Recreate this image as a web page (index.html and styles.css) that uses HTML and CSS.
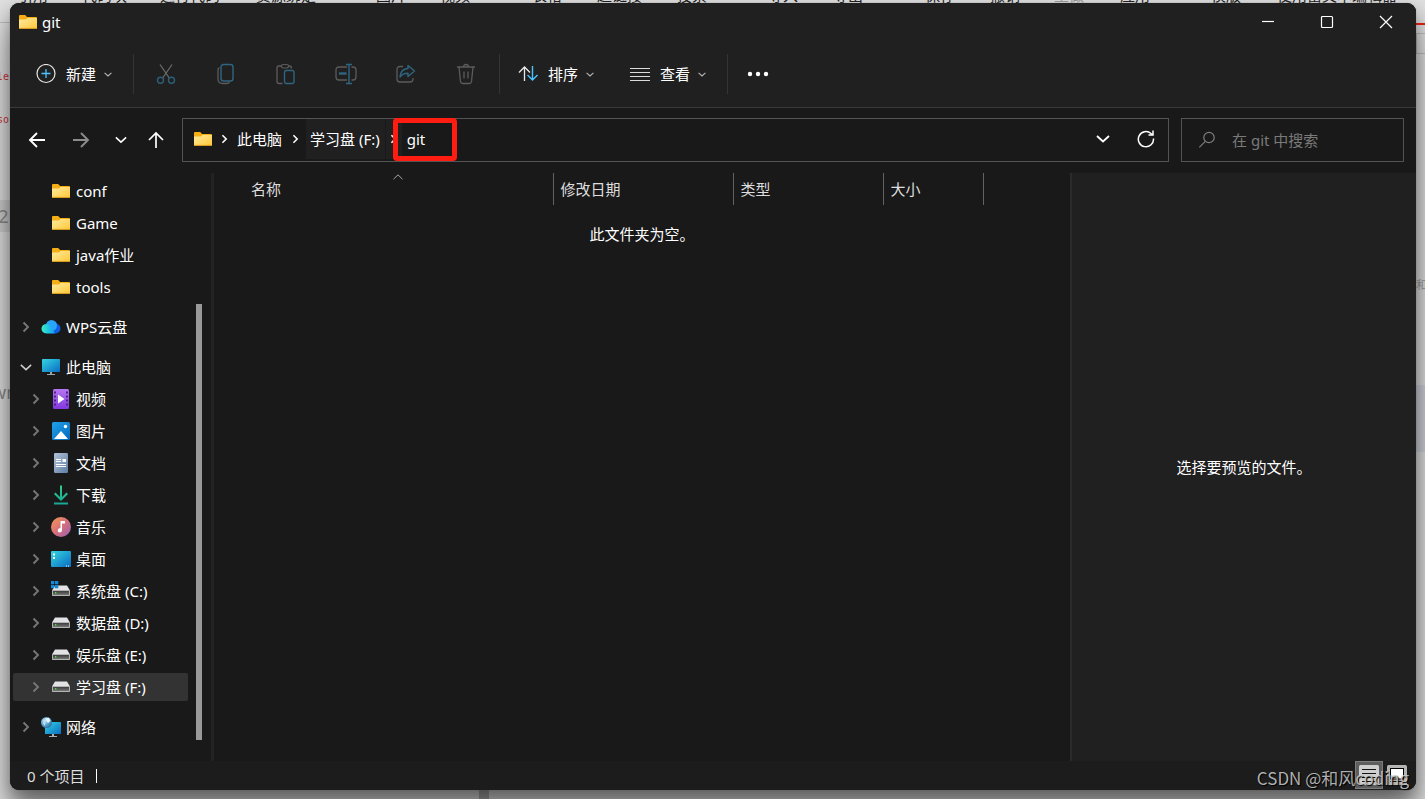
FILE: index.html
```html
<!DOCTYPE html>
<html lang="zh-CN">
<head>
<meta charset="utf-8">
<title>git</title>
<link rel="stylesheet" href="styles.css">
</head>
<body>
<svg class="defs" width="0" height="0" aria-hidden="true">
  <defs>
    <linearGradient id="gFolder" x1="0" y1="0" x2="1" y2="1"><stop offset="0" stop-color="#ffe9a2"/><stop offset="1" stop-color="#ffc937"/></linearGradient>
    <linearGradient id="gScreen" x1="0" y1="0" x2="1" y2="1"><stop offset="0" stop-color="#34d5e0"/><stop offset="1" stop-color="#0a6cc4"/></linearGradient>
    <linearGradient id="gVideo" x1="0" y1="0" x2="0" y2="1"><stop offset="0" stop-color="#b676f2"/><stop offset="1" stop-color="#8338dd"/></linearGradient>
    <linearGradient id="gPic" x1="0" y1="0" x2="1" y2="1"><stop offset="0" stop-color="#1fa3ea"/><stop offset="1" stop-color="#0767bd"/></linearGradient>
    <linearGradient id="gDoc" x1="0" y1="0" x2="1" y2="1"><stop offset="0" stop-color="#b3c3d8"/><stop offset="1" stop-color="#5d7da3"/></linearGradient>
    <linearGradient id="gDown" x1="0" y1="0" x2="0" y2="1"><stop offset="0" stop-color="#2fd08a"/><stop offset="1" stop-color="#16a597"/></linearGradient>
    <linearGradient id="gMusic" x1="0" y1="0" x2="1" y2="1"><stop offset="0" stop-color="#f49a52"/><stop offset=".5" stop-color="#d7707a"/><stop offset="1" stop-color="#9560b8"/></linearGradient>
    <linearGradient id="gCloud" x1="0" y1="0" x2="1" y2="0"><stop offset="0" stop-color="#36f0c0"/><stop offset="1" stop-color="#0f9bff"/></linearGradient>
    <linearGradient id="gDrive" x1="0" y1="0" x2="0" y2="1"><stop offset="0" stop-color="#3c3c3c"/><stop offset="1" stop-color="#777"/></linearGradient>
    <radialGradient id="gGlobe" cx=".35" cy=".35" r=".7"><stop offset="0" stop-color="#d4eefa"/><stop offset=".5" stop-color="#5fa9d2"/><stop offset="1" stop-color="#2c6f9f"/></radialGradient>
    <symbol id="folder" viewBox="0 0 20 20"><path d="M1 4q0-1 1-1h5.200l1.800 2h9q1 0 1 1v10.500H1z" fill="#f7ae12"/><path d="M1 7.500h7l1.700-1.500H19v10q0 .6-.6.6H1.600q-.6 0-.6-.6z" fill="url(#gFolder)"/><path d="M1 16.400h18" stroke="#dd9a1c" stroke-width=".8"/></symbol>
    <symbol id="drive" viewBox="0 0 20 20"><path d="M4 4.500h12l3 5H1z" fill="#e2e2e4"/><rect x="1" y="9" width="18" height="6" rx=".8" fill="#b4b4b4"/><rect x="2" y="10" width="16" height="4" fill="url(#gDrive)"/><rect x="4" y="11" width="1.300" height="1.500" fill="#3dea35"/></symbol>
    <symbol id="right" viewBox="0 0 8 12"><path d="M1.500 1.500 6 6l-4.500 4.500" fill="none" stroke="currentColor" stroke-width="1.900"/></symbol>
    <symbol id="down" viewBox="0 0 14 8"><path d="m1 1 6 5.500L13 1" fill="none" stroke="currentColor" stroke-width="1.800"/></symbol>
  </defs>
</svg>

<div class="backdrop" aria-hidden="true">
  <span class="bt" style="left:18px">引用</span><span class="bt" style="left:82px">代码块</span><span class="bt" style="left:160px">运行代码</span><span class="bt" style="left:256px">资源绑定</span><span class="bt" style="left:376px">图片</span><span class="bt" style="left:440px">视频</span><span class="bt" style="left:532px">表格</span><span class="bt" style="left:597px">超链接</span><span class="bt" style="left:677px">投票</span><span class="bt" style="left:768px">导入</span><span class="bt" style="left:833px">导出</span><span class="bt" style="left:925px">保存</span><span class="bt" style="left:990px">撤销</span><span class="bt faint" style="left:1054px">重做</span><span class="bt" style="left:1120px">应用</span><span class="bt" style="left:1211px">模版</span><span class="bt" style="left:1277px">使用富文本编辑器</span>
  <i class="lline"></i><span class="code c1">ale</span><span class="code c2">eso</span>
  <span class="gutter g1">62</span><span class="gutter g2">wn</span>
  <i class="redline"></i><i class="rbox"></i><i class="rblock"></i><span class="rtext">学和</span><i class="tick"></i>
</div>

<main class="window">
  <header class="chrome">
    <div class="titlebar">
      <svg class="i20"><use href="#folder"/></svg>
      <h1 class="title">git</h1>
      <div class="caption">
        <button class="cap" aria-label="最小化"><svg width="14" height="14" viewBox="0 0 14 14"><path d="M1 6.500h12" stroke="#fff" stroke-width="1.200"/></svg></button>
        <button class="cap" aria-label="最大化"><svg width="14" height="14" viewBox="0 0 14 14"><rect x="1.500" y="1.500" width="11" height="11" rx="1" fill="none" stroke="#fff" stroke-width="1.200"/></svg></button>
        <button class="cap" aria-label="关闭"><svg width="14" height="14" viewBox="0 0 14 14"><path d="m1 1 12 12M13 1 1 13" stroke="#fff" stroke-width="1.200"/></svg></button>
      </div>
    </div>
    <div class="toolbar">
      <button class="cmd">
        <svg class="i20" viewBox="0 0 20 20" fill="none"><circle cx="10" cy="9.500" r="9" stroke="#e8e8e8" stroke-width="1.200"/><path d="M10 5v9M5.500 9.500h9" stroke="#4cc2ff" stroke-width="1.300"/></svg>
        新建<svg class="caret"><use href="#down"/></svg>
      </button>
      <span class="sep"></span>
      <div class="tools">
        <button class="tool" aria-label="剪切"><svg width="22" height="22" viewBox="0 0 22 22" fill="none"><path d="M5 1.500 14.300 15M17 1.500 7.700 15" stroke="#6b6b6b" stroke-width="1.300"/><circle cx="5.500" cy="17.300" r="3" stroke="#2c5f79" stroke-width="1.400"/><circle cx="16.500" cy="17.300" r="3" stroke="#2c5f79" stroke-width="1.400"/></svg></button>
        <button class="tool" aria-label="复制"><svg width="22" height="22" viewBox="0 0 22 22" fill="none"><path d="M4.500 4.500Q3 5 3 7v9q0 4.500 4.500 4.500h4Q14 20.500 14.500 19" stroke="#5b5b5b" stroke-width="1.300"/><rect x="6" y="1.500" width="12" height="16.500" rx="2.500" stroke="#2f6580" stroke-width="1.400"/></svg></button>
        <button class="tool" aria-label="粘贴"><svg width="22" height="22" viewBox="0 0 22 22" fill="none"><path d="M7 3H3.800Q2 3 2 5v13.500q0 2 2 2h3.500M13 3h1.500Q16.500 3 16.500 5.500" stroke="#5b5b5b" stroke-width="1.300"/><rect x="6.500" y="1.500" width="7" height="3.500" rx="1.700" stroke="#5b5b5b" stroke-width="1.200"/><rect x="9.500" y="7.500" width="9.500" height="13" rx="1.700" stroke="#2f6580" stroke-width="1.400"/></svg></button>
        <button class="tool" aria-label="重命名"><svg width="22" height="22" viewBox="0 0 22 22" fill="none"><path d="M12 4H4Q1 4 1 7v7q0 3 3 3h8M16.500 4h1.500q3 0 3 3v7q0 3-3 3h-1.500" stroke="#5b5b5b" stroke-width="1.300"/><path d="M14 1.500v19M11 1.500h6M11 20.500h6" stroke="#2f6580" stroke-width="1.400"/><path d="M4 10.500h7.500" stroke="#2f6580" stroke-width="2.400"/></svg></button>
        <button class="tool" aria-label="共享"><svg width="22" height="22" viewBox="0 0 22 22" fill="none"><path d="M8 3.500H5q-3 0-3 3V16q0 3 3 3h10q3 0 3-3v-1" stroke="#5b5b5b" stroke-width="1.300"/><path d="M13 2.500 19.500 8 13 13.500v-3.200q-5-.3-8 3.700.5-8 8-8.500z" stroke="#2f6580" stroke-width="1.400" stroke-linejoin="round"/></svg></button>
        <button class="tool" aria-label="删除"><svg width="22" height="22" viewBox="0 0 22 22" fill="none" stroke="#5b5b5b" stroke-width="1.300"><path d="M2 4h18M8.500 4q0-2.500 2.500-2.500T13.500 4M4 4l1.500 14.500q.3 2 2.200 2h6.600q1.900 0 2.200-2L18 4M9 8.500v7M13 8.500v7"/></svg></button>
      </div>
      <span class="sep"></span>
      <button class="cmd sort">
        <svg class="i20" viewBox="0 0 20 20" fill="none"><path d="M6.500 17V3M1 8.500 6.500 3 12 8.500" stroke="#e8e8e8" stroke-width="1.300"/><path d="M14.500 2v14M9.500 11l5 5 5-5" stroke="#4cc2ff" stroke-width="1.400"/></svg>
        排序<svg class="caret"><use href="#down"/></svg>
      </button>
      <button class="cmd view">
        <svg class="i20" viewBox="0 0 20 20"><path d="M0 4.500h20M0 8.500h20M0 12.500h20M0 16.500h20" stroke="#dcdcdc" stroke-width="1.200"/></svg>
        查看<svg class="caret"><use href="#down"/></svg>
      </button>
      <span class="sep"></span>
      <button class="tool" aria-label="查看更多"><svg width="22" height="22" viewBox="0 0 22 22" fill="#fff"><circle cx="3" cy="11" r="2.200"/><circle cx="11" cy="11" r="2.200"/><circle cx="19" cy="11" r="2.200"/></svg></button>
    </div>
  </header>

  <nav class="navrow" aria-label="导航">
    <div class="arrows">
      <button class="nav" aria-label="后退"><svg width="18" height="18" viewBox="0 0 18 18" fill="none"><path d="M17 9H2M9 2 2 9l7 7" stroke="#fff" stroke-width="1.900"/></svg></button>
      <button class="nav" aria-label="前进"><svg width="18" height="18" viewBox="0 0 18 18" fill="none"><path d="M1 9h15M9 2l7 7-7 7" stroke="#8c8c8c" stroke-width="1.900"/></svg></button>
      <button class="nav slim" aria-label="最近浏览的位置"><svg width="12" height="8"><use href="#down"/></svg></button>
      <button class="nav slim" aria-label="向上"><svg width="18" height="18" viewBox="0 0 18 18" fill="none"><path d="M9 17V2M2 9l7-7 7 7" stroke="#fff" stroke-width="1.700"/></svg></button>
    </div>
    <div class="address">
      <svg class="i20"><use href="#folder"/></svg>
      <svg class="crumbsep"><use href="#right"/></svg>
      <a class="crumb" href="#">此电脑</a>
      <svg class="crumbsep"><use href="#right"/></svg>
      <a class="crumb hot" href="#">学习盘 (F:)</a>
      <span class="hotsep"><svg class="crumbsep"><use href="#right"/></svg></span>
      <a class="crumb current" href="#">git<i class="mark"></i></a>
      <div class="addrbtns">
        <button class="plain" aria-label="上一个位置"><svg width="14" height="8"><use href="#down"/></svg></button>
        <button class="plain" aria-label="刷新"><svg width="18" height="18" viewBox="0 0 18 18" fill="none" stroke="#fff" stroke-width="1.500"><path d="M16.500 8.500A7.600 7.600 0 1 1 14 3.500l2 1.500M16 .5V5h-4.500"/></svg></button>
      </div>
    </div>
    <label class="search">
      <svg width="18" height="18" viewBox="0 0 18 18" fill="none" stroke="#7d7d7d" stroke-width="1.200"><circle cx="11" cy="6.500" r="5.200"/><path d="m7.300 10.300-6 6"/></svg>
      <input class="searchbox" type="search" placeholder="在 git 中搜索" aria-label="在 git 中搜索">
    </label>
  </nav>

  <div class="body">
    <aside class="sidebar">
      <div class="tree">
        <div class="group">
          <a class="item leaf" href="#"><svg class="i20"><use href="#folder"/></svg>conf</a>
          <a class="item leaf" href="#"><svg class="i20"><use href="#folder"/></svg>Game</a>
          <a class="item leaf" href="#"><svg class="i20"><use href="#folder"/></svg>java作业</a>
          <a class="item leaf" href="#"><svg class="i20"><use href="#folder"/></svg>tools</a>
        </div>
        <div class="group">
          <a class="item" href="#"><svg class="exp"><use href="#right"/></svg><svg class="i20" viewBox="0 0 20 20"><circle cx="14.500" cy="11.500" r="5" fill="#0b5fe0"/><circle cx="10.500" cy="8.500" r="5.500" fill="#2aa4f8"/><path d="M5 7q4 0 5.500 3.500L14 16.500H5.500Q.5 16 .5 11.800T5 7z" fill="url(#gCloud)"/></svg>WPS云盘</a>
        </div>
        <div class="group">
          <a class="item open" href="#"><svg class="expdown"><use href="#down"/></svg><svg class="i20" viewBox="0 0 20 20"><rect x="1" y="2" width="18" height="13" rx=".7" fill="url(#gScreen)"/><path d="M9 15h2v2h3v1H6v-1h3z" fill="#9aa5ad"/></svg>此电脑</a>
          <a class="item sub" href="#"><svg class="exp"><use href="#right"/></svg><svg class="i20" viewBox="0 0 20 20"><rect x="2" y="0" width="16" height="20" rx="1.500" fill="url(#gVideo)"/><path d="M4 2.500v16M16 2.500v16" stroke="#4d2190" stroke-width="2" stroke-dasharray="2 2"/><path d="m7 5.500 6.500 4.500L7 14.500z" fill="#fff"/></svg>视频</a>
          <a class="item sub" href="#"><svg class="exp"><use href="#right"/></svg><svg class="i20" viewBox="0 0 20 20"><rect x="1" y="1" width="18" height="18" rx="1.500" fill="url(#gPic)"/><path d="m3 18 7-8 7 8z" fill="#fff"/><circle cx="14.500" cy="5.500" r="1.700" fill="#fff"/></svg>图片</a>
          <a class="item sub" href="#"><svg class="exp"><use href="#right"/></svg><svg class="i20" viewBox="0 0 20 20"><rect x="3" y="0" width="14" height="20" rx="1.300" fill="url(#gDoc)"/><path d="M5 6.500h5M5 8.500h5M5 11.500h10M5 13.500h10" stroke="#fff"/><rect x="11.500" y="6" width="3.500" height="3" fill="#fff"/></svg>文档</a>
          <a class="item sub" href="#"><svg class="exp"><use href="#right"/></svg><svg class="i20" viewBox="0 0 20 20"><path d="M9 .5h2V12l4.500-4.500L17 9l-7 7-7-7 1.500-1.500L9 12zM3 17.500h14v2H3z" fill="url(#gDown)"/></svg>下载</a>
          <a class="item sub" href="#"><svg class="exp"><use href="#right"/></svg><svg class="i20" viewBox="0 0 20 20"><circle cx="10" cy="10" r="10" fill="url(#gMusic)"/><path d="M9.500 4H14v2.500h-3v6.800a2.100 2.100 0 1 1-1.500-2z" fill="#fff"/></svg>音乐</a>
          <a class="item sub" href="#"><svg class="exp"><use href="#right"/></svg><svg class="i20" viewBox="0 0 20 20"><rect x="0" y="2" width="20" height="16" rx="1" fill="url(#gScreen)"/><path d="M2 4.500h2v2H2zM2 8h2v2H2z" fill="#fff"/><path d="M15 17h1M17 17h1" stroke="#fff"/></svg>桌面</a>
          <a class="item sub" href="#"><svg class="exp"><use href="#right"/></svg><svg class="i20" viewBox="0 0 20 20"><use href="#drive"/><path d="M0 0h3.300v3.300H0zM4 0h3.300v3.300H4zM0 4h3.300v3.300H0zM4 4h3.300v3.300H4z" fill="#1389d8"/></svg>系统盘 (C:)</a>
          <a class="item sub" href="#"><svg class="exp"><use href="#right"/></svg><svg class="i20"><use href="#drive"/></svg>数据盘 (D:)</a>
          <a class="item sub" href="#"><svg class="exp"><use href="#right"/></svg><svg class="i20"><use href="#drive"/></svg>娱乐盘 (E:)</a>
          <a class="item sub selected" href="#"><svg class="exp"><use href="#right"/></svg><svg class="i20"><use href="#drive"/></svg>学习盘 (F:)</a>
        </div>
        <div class="group">
          <a class="item" href="#"><svg class="exp"><use href="#right"/></svg><svg class="i20" viewBox="0 0 20 20"><rect x="4" y="5" width="16" height="12" rx=".6" fill="url(#gScreen)"/><path d="M11 17h2v2h3v1H8v-1h3z" fill="#a6b0b6"/><circle cx="5.500" cy="5.500" r="5.500" fill="url(#gGlobe)"/><path d="M4 1.500 8 .8 9.500 4 7 6zM2 5l2 1.500L3.500 9z" fill="#e6f6ff"/></svg>网络</a>
        </div>
      </div>
      <div class="scroll"><span class="thumb"></span></div>
    </aside>

    <section class="files">
      <table class="columns">
        <thead><tr>
          <th class="name">名称<svg class="asc" viewBox="0 0 10 6"><path d="M.5 5.200 5 .8l4.500 4.400" fill="none" stroke="#aaa"/></svg></th>
          <th class="date">修改日期</th><th class="type">类型</th><th class="size">大小</th>
        </tr></thead>
      </table>
      <p class="empty">此文件夹为空。</p>
    </section>

    <section class="preview"><p>选择要预览的文件。</p></section>
  </div>

  <footer class="status">
    <span class="count">0 个项目</span>
    <div class="modes">
      <button class="mode on" aria-label="详细信息"><svg width="20" height="20" viewBox="0 0 20 20"><rect width="20" height="20" rx="1.500" fill="#cfcfcf"/><path d="M3 4.500h14M3 8.500h14M3 12.500h14M3 16.500h14" stroke="#111" stroke-width="1.100"/></svg></button>
      <button class="mode" aria-label="大缩略图"><svg width="20" height="20" viewBox="0 0 20 20"><rect width="20" height="20" rx="1.500" fill="#b4b4b4"/><rect x="3.500" y="3.500" width="13" height="10.500" fill="#fff" stroke="#000"/><path d="M3 16.500h14" stroke="#111"/></svg></button>
    </div>
    <span class="watermark">CSDN @和风coding</span>
  </footer>
</main>
</body>
</html>
```

FILE: styles.css
```css
* { box-sizing: border-box; }

body {
  margin: 0;
  height: 100vh;
  padding: 3px 9px 9px 10px;
  overflow: hidden;
  position: relative;
  background: #dedede;
  color: #fff;
  font: 15px/20px "Noto Sans", "Noto Sans CJK SC", sans-serif;
}

button {
  padding: 0;
  border: 0;
  background: none;
  color: inherit;
  font: inherit;
}

a { color: inherit; text-decoration: none; }
p { margin: 0; }
svg { flex: none; display: block; }
.defs { position: absolute; }
.i20 { width: 20px; height: 20px; }

/* page behind the window */
.backdrop { position: absolute; inset: 0; overflow: hidden; color: #222; }
.backdrop > * { position: absolute; white-space: nowrap; }
.bt { top: -14px; font-size: 15px; line-height: 18px; }
.faint { color: #999; }
.code { left: -9px; color: #c33; font: 10px/12px "DejaVu Sans Mono", monospace; }
.c1 { top: 71px; }
.c2 { top: 114px; }
.lline { left: 0; top: 22px; width: 10px; height: 1px; background: #bbb; }
.gutter { color: #888; font-size: 18px; line-height: 32px; }
.g1 { left: -12px; top: 200px; width: 22px; background: #ccc; }
.g2 { left: -8px; top: 376px; }
.redline { right: 0; top: 23px; width: 9px; height: 2px; background: #f02010; }
.rbox { right: 0; top: 33px; width: 9px; height: 21px; border: 1px solid #bbb; border-right: 0; }
.rblock { right: 0; top: 385px; width: 9px; height: 67px; background: #ced0da; }
.rtext { right: -2px; top: 278px; color: #999; font-size: 11px; line-height: 14px; }
.tick { left: 479px; bottom: 0; width: 10px; height: 9px; background: #aaa; }

.window {
  position: relative;
  height: 100%;
  display: flex;
  flex-direction: column;
  border-radius: 9px;
  background: #191919;
  box-shadow: 0 0 1px #555, 0 8px 16px rgba(0, 0, 0, .3), 0 24px 32px rgba(0, 0, 0, .4);
}

.chrome { background: #202020; border-bottom: 1px solid #3a3a3a; border-radius: 9px 9px 0 0; }
.titlebar { display: flex; align-items: center; height: 37px; padding-left: 8px; }
.title { margin: 0 0 0 4px; font-size: 15px; font-weight: 400; }
.caption { display: flex; margin-left: auto; padding-right: 1px; align-self: stretch; }
.cap { width: 59px; display: grid; place-items: center; }

.toolbar { display: flex; align-items: center; height: 67px; padding: 1px 0 0 26px; }
.cmd { display: flex; align-items: center; gap: 10px; margin-right: 21px; white-space: nowrap; }
.caret { width: 8px; height: 5px; margin-left: -2px; color: #bbb; }
.sep { width: 1px; height: 40px; background: #343434; }
.tools { display: flex; padding: 0 3px 0 2px; }
.tool { width: 60px; height: 40px; display: grid; place-items: center; }
.sort { margin-left: 18px; margin-right: 36px; }

.navrow { display: flex; padding: 10px 12px 11px 5px; }
.arrows { display: flex; width: 167px; }
.nav { width: 44px; display: grid; place-items: center; }
.slim { width: 35px; }
.address {
  flex: 1;
  height: 44px;
  display: flex;
  align-items: center;
  padding: 0 10px 2px;
  border: 1px solid #535353;
}
.crumbsep { width: 7px; height: 10px; margin: 0 9px 0 8px; }
.crumb { white-space: nowrap; }
.crumb + .crumbsep { margin-left: 10px; }
.hot { align-self: stretch; display: flex; align-items: center; margin-left: -2px; padding: 0 5px 0 4px; background: #202020; }
.hotsep { align-self: stretch; display: flex; align-items: center; width: 16px; margin-left: 1px; background: #202020; }
.hotsep .crumbsep { margin: 0 4px; }
.current { position: relative; padding-left: 5px; }
.mark { position: absolute; left: -9px; top: -11px; width: 64px; height: 43px; border: 5px solid #ff1c10; border-radius: 4px; }
.addrbtns { display: flex; margin-left: auto; gap: 27px; padding: 0 3px; }
.plain { display: grid; place-items: center; }
.search {
  width: 223px;
  height: 44px;
  margin-left: 12px;
  display: flex;
  align-items: center;
  gap: 16px;
  padding: 0 0 1px 16px;
  border: 1px solid #535353;
}
.searchbox { flex: 1; min-width: 0; padding: 0; border: 0; outline: 0; background: none; color: #fff; font: inherit; }
.searchbox::placeholder { color: #7a7a7a; opacity: 1; }

.body { flex: 1; min-height: 0; display: flex; }
.sidebar { width: 204px; display: flex; border-right: 3px solid #222; }
.tree { width: 178px; padding: 4px 0 0 3px; display: flex; flex-direction: column; gap: 12px; }
.group { display: flex; flex-direction: column; gap: 4px; }
.item { height: 28px; display: flex; align-items: center; gap: 5px; padding-left: 9px; border-radius: 2px; white-space: nowrap; }
.sub { padding-left: 19px; }
.leaf { padding-left: 38px; }
.open { padding-left: 7px; }
.exp { width: 8px; height: 12px; margin-right: 6px; color: #777; }
.expdown { width: 12px; height: 7px; margin-right: 4px; color: #ccc; }
.selected { background: #333; }
.scroll { flex: 1; display: flex; padding: 131px 0 21px 8px; }
.thumb { width: 6px; background: #999; }

.files { flex: 1; min-width: 0; }
.columns { margin-left: 29px; border-collapse: collapse; table-layout: fixed; width: 740px; }
.columns th { position: relative; height: 32px; padding: 0 7px; border-right: 1px solid #626262; color: #dedede; font-weight: 400; text-align: left; }
.columns .name { width: 310px; padding-left: 8px; }
.date { width: 180px; }
.type { width: 150px; }
.size { width: 100px; }
.asc { position: absolute; left: 150px; top: 1px; width: 10px; height: 6px; }
.empty { margin-top: 19px; text-align: center; }

.preview { width: 346px; display: grid; place-items: center; border-left: 2px solid #2b2b2b; background: #202020; }

.status { position: relative; height: 29px; display: flex; align-items: center; padding: 0 5px 0 17px; border-radius: 0 0 9px 9px; background: #1c1c1c; color: #dedede; }
.count { padding-right: 12px; border-right: 1px solid #fff; line-height: 14px; }
.modes { display: flex; align-self: flex-start; margin-left: auto; }
.mode { width: 28px; height: 28px; display: grid; place-items: center; }
.on { background: #5e5e5e; border: 1px solid #7c7c7c; }
.watermark { position: absolute; right: 7px; bottom: 0; color: rgba(205, 205, 205, .85); font: 17px/24px "Noto Sans CJK SC", sans-serif; text-shadow: 1px 1px 1px #000; }
```
